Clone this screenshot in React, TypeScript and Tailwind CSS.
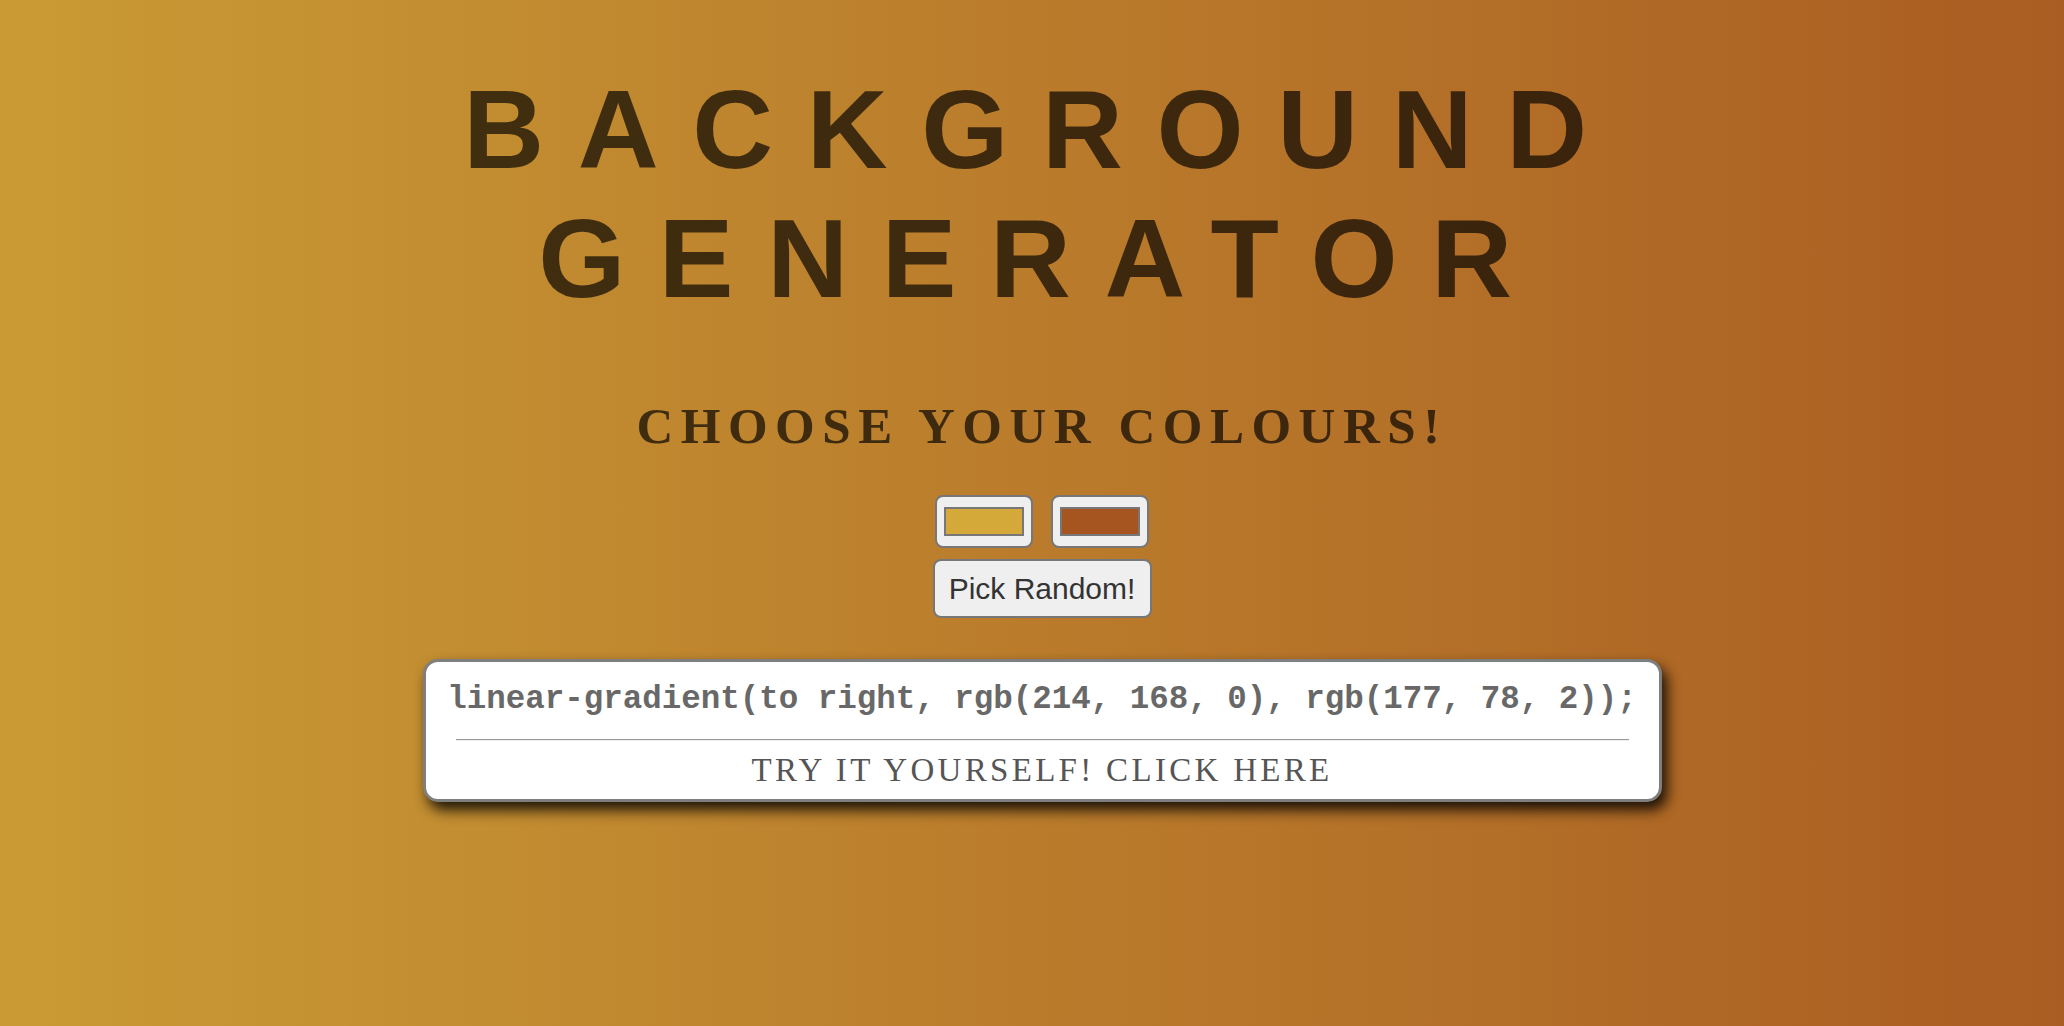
import React from "react";

export default function App() {
  return (
    <div className="min-h-screen w-full bg-[linear-gradient(to_right,#ca9b35,#aa5d22)] pl-[20px] pt-[65px] flex flex-col items-center text-center">
      <h1 className="font-['Liberation_Sans',Arial,sans-serif] font-bold text-[112px] leading-[129px] tracking-[0.3em] text-[rgba(0,0,0,0.67)] uppercase">
        <div>Background</div>
        <div>Generator</div>
      </h1>
      <h3 className="mt-[74px] font-['Liberation_Serif','Times_New_Roman',serif] font-bold text-[51px] leading-[58px] tracking-[0.147em] text-[rgba(0,0,0,0.67)] uppercase">
        Choose your colours!
      </h3>
      <div className="mt-[40px] flex gap-[18px]">
        <div className="w-[98px] h-[53px] rounded-[8px] border-2 border-[#777] bg-[#efefef] flex items-center justify-center">
          <div className="w-[80px] h-[29px] border-2 border-[#777] bg-[#d4a939]" />
        </div>
        <div className="w-[98px] h-[53px] rounded-[8px] border-2 border-[#777] bg-[#efefef] flex items-center justify-center">
          <div className="w-[80px] h-[29px] border-2 border-[#777] bg-[#a65420]" />
        </div>
      </div>
      <button className="mt-[11px] w-[219px] h-[59px] rounded-[8px] border-2 border-[#777] bg-[#efefef] font-['Liberation_Sans',Arial,sans-serif] text-[30px] text-[#333]">
        Pick Random!
      </button>
      <div className="mt-[41px] w-[1239px] rounded-[15px] border-[3px] border-[#7f7f7f] bg-white shadow-[5px_8px_14px_rgba(0,0,0,0.85)] pt-[20px] pb-[10px] flex flex-col items-center">
        <div className="font-['Liberation_Mono','Courier_New',monospace] font-bold text-[32.5px] leading-[36px] text-[#686868] whitespace-nowrap">
          linear-gradient(to right, rgb(214, 168, 0), rgb(177, 78, 2));
        </div>
        <div className="mt-[21px] self-stretch mx-[30px] h-[2px] border-t border-[#999] border-b border-b-[#eee]" />
        <div className="mt-[10px] font-['Liberation_Serif','Times_New_Roman',serif] text-[33px] leading-[38px] tracking-[0.1em] text-[#555] uppercase">
          Try it yourself! Click here
        </div>
      </div>
    </div>
  );
}
